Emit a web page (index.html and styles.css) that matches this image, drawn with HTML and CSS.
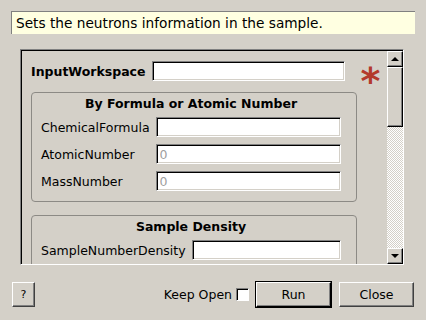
FILE: index.html
```html
<!DOCTYPE html>
<html lang="en">
<head>
    <meta charset="UTF-8">
    <title>SetSampleMaterial</title>
    <link rel="stylesheet" href="styles.css">
</head>
<body>

<div class="dialog">
    <div class="desc">Sets the neutrons information in the sample.</div>

    <div class="frame">
        <div class="viewport">
            <div class="row-top">
                <span class="label-bold">InputWorkspace</span>
                <input class="field wide" type="text">
                <span class="star">*</span>
            </div>

            <div class="group">
                <div class="group-title">By Formula or Atomic Number</div>
                <div class="grid">
                    <span>ChemicalFormula</span>
                    <input class="field" type="text">
                    <span>AtomicNumber</span>
                    <input class="field" type="text" placeholder="0">
                    <span>MassNumber</span>
                    <input class="field" type="text" placeholder="0">
                </div>
            </div>

            <div class="group">
                <div class="group-title">Sample Density</div>
                <div class="grid">
                    <span>SampleNumberDensity</span>
                    <input class="field" type="text">
                </div>
            </div>
        </div>

        <div class="scrollbar">
            <div class="sb-btn"><span class="arrow up"></span></div>
            <div class="sb-handle"></div>
            <div class="sb-track"></div>
            <div class="sb-btn"><span class="arrow down"></span></div>
        </div>
    </div>

    <div class="buttons">
        <button class="btn help">?</button>
        <span class="spacer"></span>
        <label class="keep">Keep Open <span class="check"></span></label>
        <button class="btn run">Run</button>
        <button class="btn close">Close</button>
    </div>
</div>

</body>
</html>
```

FILE: styles.css
```css
body {
    margin: 0;
    background: #d4d0c8;
    font-family: "DejaVu Sans", sans-serif;
    font-size: 12.5px;
    color: #000;
}
.dialog {
    width: 426px;
    height: 320px;
    display: flex;
    flex-direction: column;
}
.desc {
    margin: 11px 11px 0 11px;
    height: 22px;
    line-height: 22px;
    padding-left: 4px;
    font-size: 13.7px;
    background: #ffffe1;
    border-top: 1px solid #808080;
    border-left: 1px solid #808080;
}

/* scroll area */
.frame {
    margin: 15px 0 0 20px;
    width: 381px;
    height: 213px;
    display: flex;
    border-top: 1px solid #808080;
    border-left: 1px solid #808080;
    border-right: 1px solid #fff;
    border-bottom: 1px solid #fff;
    box-shadow: inset 1px 1px 0 #000;
    padding: 1px 0 0 1px;
}
.viewport {
    flex: 1;
    overflow: hidden;
    padding: 9px 0 0 9px;
}
.row-top {
    display: flex;
    align-items: center;
    height: 22px;
}
.label-bold {
    font-weight: bold;
    margin-right: 6px;
}
.field {
    box-sizing: border-box;
    height: 20px;
    margin: 0;
    padding: 0 3px;
    background: #fff;
    border-top: 1px solid #808080;
    border-left: 1px solid #808080;
    border-right: 1px solid #fff;
    border-bottom: 1px solid #fff;
    box-shadow: inset 1px 1px 0 #000, inset -1px -1px 0 #d4d0c8;
    font-family: "DejaVu Sans", sans-serif;
    font-size: 12.5px;
    outline: none;
}
.field::placeholder {
    color: #a0a0a0;
}
.wide {
    width: 193px;
}
.star {
    margin-left: 16px;
    color: #b33a2c;
    font-weight: bold;
    font-size: 38px;
    line-height: 22px;
    height: 22px;
    padding-top: 10px;
    box-sizing: border-box;
}
.group {
    width: 326px;
    box-sizing: border-box;
    margin-top: 10px;
    border: 1px solid #8c8a85;
    border-radius: 4px;
    padding: 3px 15px 10px 9px;
}
.group + .group {
    margin-top: 13px;
}
.group-title {
    font-weight: bold;
    text-align: center;
    height: 16px;
    line-height: 16px;
}
.grid {
    margin-top: 5px;
    display: grid;
    grid-template-columns: auto minmax(0, 1fr);
    column-gap: 6px;
    row-gap: 7px;
    align-items: center;
}
.grid .field {
    width: 100%;
    min-width: 0;
}

/* scrollbar */
.scrollbar {
    width: 16px;
    display: flex;
    flex-direction: column;
}
.sb-btn, .sb-handle {
    box-sizing: border-box;
    background: #d4d0c8;
    border-top: 1px solid #fff;
    border-left: 1px solid #fff;
    border-right: 1px solid #000;
    border-bottom: 1px solid #000;
    box-shadow: inset -1px -1px 0 #808080;
}
.sb-btn {
    height: 16px;
    display: flex;
    align-items: center;
    justify-content: center;
}
.sb-handle {
    height: 60px;
}
.sb-track {
    flex: 1;
    background: repeating-conic-gradient(#fff 0 25%, #d4d0c8 0 50%) 0 0 / 2px 2px;
}
.arrow {
    width: 0;
    height: 0;
    border-left: 4px solid transparent;
    border-right: 4px solid transparent;
}
.arrow.up {
    border-bottom: 4px solid #000;
}
.arrow.down {
    border-top: 4px solid #000;
}

/* bottom buttons */
.buttons {
    display: flex;
    align-items: center;
    padding: 16px 12px 0 12px;
}
.spacer {
    flex: 1;
}
.btn {
    box-sizing: border-box;
    height: 25px;
    background: #d4d0c8;
    border-top: 1px solid #fff;
    border-left: 1px solid #fff;
    border-right: 1px solid #404040;
    border-bottom: 1px solid #404040;
    box-shadow: inset -1px -1px 0 #808080;
    font-family: "DejaVu Sans", sans-serif;
    font-size: 12.5px;
    padding: 0;
}
.help {
    width: 23px;
    font-size: 11px;
}
.keep {
    display: flex;
    align-items: center;
    margin-right: 6px;
}
.check {
    display: inline-block;
    box-sizing: border-box;
    width: 13px;
    height: 13px;
    margin-left: 4px;
    background: #fff;
    border-top: 1px solid #808080;
    border-left: 1px solid #808080;
    border-right: 1px solid #fff;
    border-bottom: 1px solid #fff;
    box-shadow: inset 1px 1px 0 #000;
}
.run {
    width: 77px;
    height: 27px;
    border: 2px solid #000;
    border-top-color: #fff;
    border-left-color: #fff;
    outline: 1px solid #000;
    outline-offset: -1px;
}
.close {
    width: 75px;
    margin-left: 7px;
}
```
